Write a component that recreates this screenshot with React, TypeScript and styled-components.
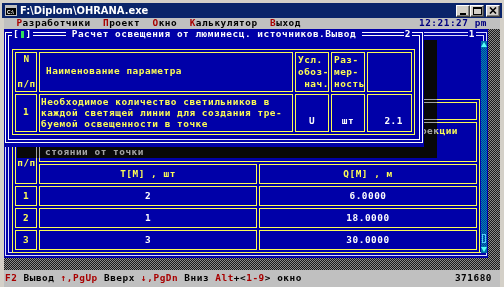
import styled, { createGlobalStyle, css } from 'styled-components';

const BLUE = '#0000a8';
const YELLOW = '#fcfc54';
const WHITE = '#fcfcfc';
const PANEL = '#c0c0c0';
const RED = '#a80000';

const dos = css`
  font-family: "DejaVu Sans Mono", "Liberation Mono", monospace;
  font-weight: bold;
  font-size: 9.4px;
  letter-spacing: 0.54px;
  line-height: 10.8px;
`;

const GlobalStyle = createGlobalStyle`
  * { box-sizing: border-box; }
  html, body { margin: 0; padding: 0; }
  body { width: 504px; height: 287px; overflow: hidden; background: #d4d0c8; }
`;

const Screen = styled.div`
  width: 504px;
  height: 287px;
  display: flex;
  flex-direction: column;
  padding: 3px 2px 0;
  background: #d4d0c8;
  overflow: hidden;
`;

const TitleBar = styled.header`
  height: 15px;
  flex: none;
  display: flex;
  align-items: center;
  padding: 0 2px 0 3px;
  background: #0a246a;
  color: #fff;
  font: bold 11px "Liberation Sans Narrow", "DejaVu Sans Condensed", sans-serif;
`;

const AppIcon = styled.svg`
  width: 12px;
  height: 11px;
  margin-right: 3px;
  flex: none;
`;

const Caption = styled.span`
  letter-spacing: 0;
`;

const Controls = styled.div`
  margin-left: auto;
  display: flex;
  align-items: center;
`;

const CtlButton = styled.span<{ $gap?: boolean }>`
  width: 14px;
  height: 12px;
  display: grid;
  place-items: center;
  background: #d4d0c8;
  border: 1px solid;
  border-color: #fff #404040 #404040 #fff;
  box-shadow: inset -1px -1px 0 #808080;
  margin-left: ${(p) => (p.$gap ? '2px' : '0')};
`;

const Console = styled.main`
  flex: 1;
  min-height: 0;
  display: flex;
  flex-direction: column;
  margin: 0 2px;
`;

const MenuBar = styled.nav`
  ${dos};
  height: 11px;
  flex: none;
  display: flex;
  align-items: center;
  padding: 0 13px 0 12.4px;
  background: ${PANEL};
  color: #000;
  white-space: pre;
`;

const MenuItem = styled.span`
  margin-right: 12.4px;
`;

const Hot = styled.span`
  color: ${RED};
`;

const Clock = styled.span`
  margin-left: auto;
  color: #000080;
`;

const Desktop = styled.div`
  flex: 1;
  position: relative;
  background: repeating-conic-gradient(#8a8a8a 0 25%, #1a1a1a 0 50%) 0 0 / 2px 2px;
`;

const BackWindow = styled.section`
  position: absolute;
  left: 0;
  top: 0;
  width: 484px;
  height: 229px;
  padding: 3px 1px 2px 1px;
  background: ${BLUE};
`;

const Dialog = styled.section`
  position: absolute;
  left: 0;
  top: 0;
  width: 420px;
  height: 118px;
  padding: 3px 1px 4px 1px;
  background: ${BLUE};
`;

const DialogShadow = styled.div`
  position: absolute;
  left: 13px;
  top: 11px;
  width: 420px;
  height: 118px;
  backdrop-filter: grayscale(1) brightness(0.68);
`;

const DoubleFrame = styled.div<{ $color: string }>`
  height: 100%;
  border: 4px double ${(p) => p.$color};
  display: flex;
  flex-direction: column;
  align-items: flex-start;
`;

const FrameTitle = styled.div`
  ${dos};
  align-self: stretch;
  height: 10px;
  line-height: 10px;
  margin-top: -7px;
  display: grid;
  grid-template-columns: 1fr auto 1fr;
  align-items: center;
  color: ${WHITE};
`;

const CloseBox = styled.span`
  justify-self: start;
  margin-left: 3px;
  padding: 0 1px;
  background: ${BLUE};
`;

const CloseMark = styled.span`
  display: inline-block;
  width: 3px;
  height: 7px;
  margin: 0 1.6px;
  vertical-align: -1px;
  background: #2ee05a;
`;

const TitleText = styled.span`
  padding: 0 6.2px;
  background: ${BLUE};
`;

const WinNumber = styled.span`
  grid-column: 3;
  justify-self: end;
  margin-right: 7px;
  padding: 0 1px;
  background: ${BLUE};
`;

const DataGrid = styled.table<{ $w: number; $top: number }>`
  ${dos};
  width: ${(p) => p.$w}px;
  margin: ${(p) => p.$top}px 0 0 3px;
  table-layout: fixed;
  border-collapse: separate;
  border-spacing: 2px;
  border: 1px solid ${YELLOW};
  color: ${YELLOW};
`;

const Col = styled.col<{ $w: number }>`
  width: ${(p) => p.$w}px;
`;

const Cell = styled.td<{
  $h?: number;
  $align?: string;
  $valign?: string;
  $white?: boolean;
  $pad?: string;
  $lh?: number;
}>`
  height: ${(p) => (p.$h ? `${p.$h}px` : 'auto')};
  padding: ${(p) => p.$pad ?? '0 2px'};
  border: 1px solid ${YELLOW};
  font-weight: bold;
  line-height: ${(p) => p.$lh ?? 10.8}px;
  white-space: pre;
  overflow: hidden;
  text-align: ${(p) => p.$align ?? 'center'};
  vertical-align: ${(p) => p.$valign ?? 'middle'};
  color: ${(p) => (p.$white ? WHITE : YELLOW)};
`;

const HeaderLine = styled.div<{ $tail?: boolean }>`
  height: 10.7px;
  text-align: ${(p) => (p.$tail ? 'right' : 'left')};
  padding-right: ${(p) => (p.$tail ? '13px' : '0')};
`;

const ScrollBar = styled.div`
  position: absolute;
  right: 1px;
  top: 12px;
  bottom: 5px;
  width: 6px;
  display: flex;
  flex-direction: column;
  background: repeating-conic-gradient(#008ca8 0 25%, #0030a8 0 50%) 0 0 / 2px 2px;
`;

const ScrollArrow = styled.svg`
  width: 6px;
  height: 7px;
  flex: none;
  background: #0070a8;
`;

const ScrollTrack = styled.div`
  flex: 1;
`;

const ScrollThumb = styled.div`
  height: 9px;
  margin: 0 1px 3px;
  border: 1px solid #54c8fc;
`;

const StatusBar = styled.footer`
  ${dos};
  height: 17px;
  flex: none;
  display: flex;
  align-items: center;
  padding: 0 8px 0 1px;
  background: ${PANEL};
  color: #000;
  white-space: pre;
`;

const Key = styled.span`
  color: ${RED};
`;

const Counter = styled.span`
  margin-left: auto;
`;

const menu = ['Разработчики', 'Проект', 'Окно', 'Калькулятор', 'Выход'];

const results = [
  { n: '1', t: '2', q: '6.0000' },
  { n: '2', t: '1', q: '18.0000' },
  { n: '3', t: '3', q: '30.0000' },
];

export default function App() {
  return (
    <>
      <GlobalStyle />
      <Screen>
        <TitleBar>
          <AppIcon viewBox="0 0 12 11">
            <rect x="0.5" y="0.5" width="11" height="10" fill="#000" stroke="#c0c0c0" />
            <rect x="1" y="1" width="10" height="2" fill="#c0c0c0" />
            <text x="2" y="9" fontSize="5" fill="#fff" fontFamily="Liberation Sans">C:\</text>
          </AppIcon>
          <Caption>{'F:\\Diplom\\OHRANA.exe'}</Caption>
          <Controls>
            <CtlButton>
              <svg width="8" height="8" viewBox="0 0 8 8"><rect x="1" y="6" width="6" height="2" fill="#000" /></svg>
            </CtlButton>
            <CtlButton>
              <svg width="9" height="8" viewBox="0 0 9 8"><rect x="0.5" y="0.5" width="8" height="7" fill="none" stroke="#000" /><rect x="0" y="0" width="9" height="2" fill="#000" /></svg>
            </CtlButton>
            <CtlButton $gap>
              <svg width="8" height="7" viewBox="0 0 8 7"><path d="M1 0.5 L7 6.5 M7 0.5 L1 6.5" stroke="#000" strokeWidth="1.6" /></svg>
            </CtlButton>
          </Controls>
        </TitleBar>
        <Console>
          <MenuBar>
            {menu.map((m) => (
              <MenuItem key={m}>
                <Hot>{m[0]}</Hot>
                {m.slice(1)}
              </MenuItem>
            ))}
            <Clock>12:21:27 pm</Clock>
          </MenuBar>
          <Desktop>
            <BackWindow>
              <DoubleFrame $color="#dcdcfc">
                <FrameTitle>
                  <WinNumber>1</WinNumber>
                </FrameTitle>
                <DataGrid $w={468} $top={60}>
                  <colgroup>
                    <Col $w={22} />
                    <Col $w={218} />
                    <Col $w={218} />
                  </colgroup>
                  <tbody>
                    <tr>
                      <Cell colSpan={3} $h={18} />
                    </tr>
                    <tr>
                      <Cell rowSpan={2} $valign="top" $pad="3px 0 0 1px" $lh={10.7}>{'\n\n\nп/п'}</Cell>
                      <Cell colSpan={2} $h={40} $align="left" $valign="top" $pad="3px 5px 0" $lh={10.7}>
                        <HeaderLine $tail>проекции</HeaderLine>
                        <HeaderLine />
                        <HeaderLine>стоянии от точки</HeaderLine>
                      </Cell>
                    </tr>
                    <tr>
                      <Cell $h={20}>T[M] , шт</Cell>
                      <Cell $h={20}>Q[M] , м</Cell>
                    </tr>
                    {results.map((r) => (
                      <tr key={r.n}>
                        <Cell $h={20}>{r.n}</Cell>
                        <Cell $white>{r.t}</Cell>
                        <Cell $white>{r.q}</Cell>
                      </tr>
                    ))}
                  </tbody>
                </DataGrid>
              </DoubleFrame>
              <ScrollBar>
                <ScrollArrow viewBox="0 0 6 7"><path d="M3 1 L6 6 L0 6 Z" fill="#54fcfc" /></ScrollArrow>
                <ScrollTrack />
                <ScrollThumb />
                <ScrollArrow viewBox="0 0 6 7"><path d="M0 1 L6 1 L3 6 Z" fill="#54fcfc" /></ScrollArrow>
              </ScrollBar>
            </BackWindow>
            <DialogShadow />
            <Dialog>
              <DoubleFrame $color={WHITE}>
                <FrameTitle>
                  <CloseBox>
                    [<CloseMark />]
                  </CloseBox>
                  <TitleText>Расчет освещения от люминесц. источников.Вывод</TitleText>
                  <WinNumber>2</WinNumber>
                </FrameTitle>
                <DataGrid $w={403} $top={10}>
                  <colgroup>
                    <Col $w={22} />
                    <Col $w={254} />
                    <Col $w={34} />
                    <Col $w={34} />
                    <Col $w={45} />
                  </colgroup>
                  <tbody>
                    <tr>
                      <Cell $h={37} $pad="0 0 0 1px" $lh={12.5}>{'N\n\nп/п'}</Cell>
                      <Cell $align="left" $pad="0 6px">Наименование параметра</Cell>
                      <Cell $align="left" $pad="0 2px" $lh={12}>{'Усл.\nобоз-\n нач.'}</Cell>
                      <Cell $align="left" $pad="0 2px" $lh={12}>{'Раз-\nмер-\nность'}</Cell>
                      <Cell />
                    </tr>
                    <tr>
                      <Cell $h={38}>1</Cell>
                      <Cell $align="left" $pad="0 1px" $lh={11}>
                        {'Необходимое количество светильников в\nкаждой светящей линии для создания тре-\nбуемой освещенности в точке'}
                      </Cell>
                      <Cell $white $valign="bottom" $pad="0 2px 4px">U</Cell>
                      <Cell $white $valign="bottom" $pad="0 2px 4px">шт</Cell>
                      <Cell $white $valign="bottom" $align="right" $pad="0 8px 4px 0">2.1</Cell>
                    </tr>
                  </tbody>
                </DataGrid>
              </DoubleFrame>
            </Dialog>
          </Desktop>
          <StatusBar>
            <Key>F2</Key> Вывод <Key>↑,PgUp</Key> Вверх <Key>↓,PgDn</Key> Вниз <Key>Alt</Key>+&lt;<Key>1-9</Key>&gt; окно
            <Counter>371680</Counter>
          </StatusBar>
        </Console>
      </Screen>
    </>
  );
}
